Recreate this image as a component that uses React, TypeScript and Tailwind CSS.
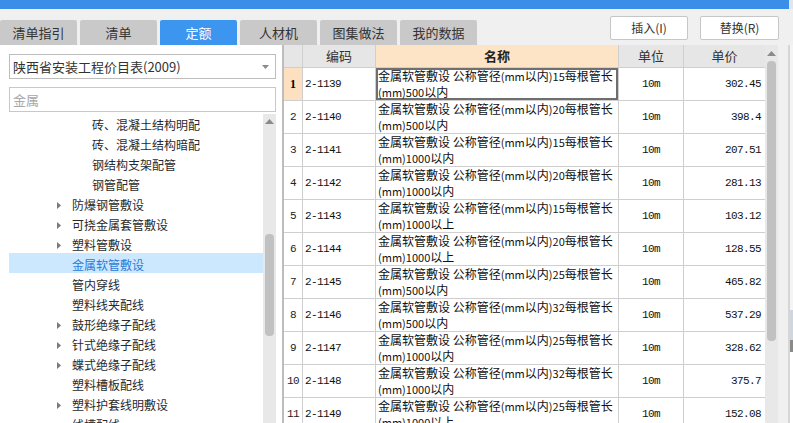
import React from "react";

const tabs = ["清单指引", "清单", "定额", "人材机", "图集做法", "我的数据"];

type TreeItem = { text: string; level: 2 | 3; arrow?: boolean; selected?: boolean };
const tree: TreeItem[] = [
  { text: "砖、混凝土结构明配", level: 3 },
  { text: "砖、混凝土结构暗配", level: 3 },
  { text: "钢结构支架配管", level: 3 },
  { text: "钢管配管", level: 3 },
  { text: "防爆钢管敷设", level: 2, arrow: true },
  { text: "可挠金属套管敷设", level: 2, arrow: true },
  { text: "塑料管敷设", level: 2, arrow: true },
  { text: "金属软管敷设", level: 2, selected: true },
  { text: "管内穿线", level: 2 },
  { text: "塑料线夹配线", level: 2 },
  { text: "鼓形绝缘子配线", level: 2, arrow: true },
  { text: "针式绝缘子配线", level: 2, arrow: true },
  { text: "蝶式绝缘子配线", level: 2, arrow: true },
  { text: "塑料槽板配线", level: 2 },
  { text: "塑料护套线明敷设", level: 2, arrow: true },
  { text: "线槽配线", level: 2 },
];

const rows: [string, string, string, string][] = [
  ["2-1139", "15", "500以内", "302.45"],
  ["2-1140", "20", "500以内", "398.4"],
  ["2-1141", "15", "1000以内", "207.51"],
  ["2-1142", "20", "1000以内", "281.13"],
  ["2-1143", "15", "1000以上", "103.12"],
  ["2-1144", "20", "1000以上", "128.55"],
  ["2-1145", "25", "500以内", "465.82"],
  ["2-1146", "32", "500以内", "537.29"],
  ["2-1147", "25", "1000以内", "328.62"],
  ["2-1148", "32", "1000以内", "375.7"],
  ["2-1149", "25", "1000以上", "152.08"],
];

function UpArrow() {
  return (
    <svg width="9" height="5" viewBox="0 0 9 5">
      <polygon points="0,5 4.5,0 9,5" fill="#8a8a8a" />
    </svg>
  );
}

export default function App() {
  return (
    <div className="w-[793px] h-[423px] overflow-hidden bg-[#f0f0f0] flex flex-col font-['Noto_Sans_CJK_SC',sans-serif] text-[#333]">
      {/* title bar */}
      <div className="h-[9px] flex shrink-0">
        <div className="w-[789px] bg-[#3b8ee8]" />
        <div className="flex-1 bg-[#dfe6ee]" />
      </div>

      {/* toolbar */}
      <div className="h-[36px] flex shrink-0">
        <div className="flex items-end gap-[3px]">
          {tabs.map((t) => (
            <div
              key={t}
              className={
                t === "定额"
                  ? "w-[77px] h-[25px] flex items-center justify-center text-[13px] rounded-t-[2px] bg-[#3c95ef] text-white"
                  : "w-[77px] h-[25px] flex items-center justify-center text-[13px] rounded-t-[2px] bg-[#c9c9c9] text-[#333]"
              }
            >
              {t}
            </div>
          ))}
        </div>
        <div className="ml-auto mr-[14px] mt-[7px] flex gap-[12px]">
          <div className="w-[78px] h-[24px] bg-white border border-[#c6c6c6] rounded-[2px] flex items-center justify-center text-[12px] text-[#333]">
            插入(I)
          </div>
          <div className="w-[79px] h-[24px] bg-white border border-[#c6c6c6] rounded-[2px] flex items-center justify-center text-[12px] text-[#333]">
            替换(R)
          </div>
        </div>
      </div>

      {/* main */}
      <div className="flex-1 flex min-h-0">
        {/* left panel */}
        <div className="w-[282px] bg-white flex flex-col shrink-0">
          <div className="pl-[9px] pt-[9px]">
            <div className="w-[267px] h-[25px] border border-[#bdbdbd] flex items-center pl-[3px] pr-[6px] text-[13px] text-[#333]">
              <span className="flex-1">陕西省安装工程价目表(2009)</span>
              <svg width="7" height="4" viewBox="0 0 7 4">
                <polygon points="0,0 7,0 3.5,4" fill="#8a8a8a" />
              </svg>
            </div>
            <div className="w-[267px] h-[25px] mt-[8px] border border-[#c8c8c8] flex items-center pl-[3px] text-[13px] text-[#a8a8a8]">
              金属
            </div>
          </div>
          <div className="flex-1 flex mt-[1px] min-h-0 overflow-hidden">
            <div className="w-[263px] pl-[9px] flex flex-col shrink-0">
              {tree.map((it) => (
                <div
                  key={it.text}
                  className={
                    it.selected
                      ? "h-[20px] shrink-0 pt-[5px] leading-[14px] text-[12px] bg-[#cce8ff] text-[#2b7bd6] flex"
                      : "h-[20px] shrink-0 pt-[5px] leading-[14px] text-[12px] text-[#2a2a2a] flex"
                  }
                >
                  {it.level === 3 ? (
                    <span className="pl-[83px] whitespace-nowrap">{it.text}</span>
                  ) : (
                    <>
                      <span className="w-[63px] pl-[48px] flex items-center h-[14px]">
                        {it.arrow && (
                          <svg width="4" height="7" viewBox="0 0 4 7">
                            <polygon points="0,0 4,3.5 0,7" fill="#7a7a7a" />
                          </svg>
                        )}
                      </span>
                      <span className="whitespace-nowrap">{it.text}</span>
                    </>
                  )}
                </div>
              ))}
            </div>
            <div className="w-[13px] bg-[#e8e8e8] flex flex-col items-center pt-[5px] mt-[1px] shrink-0">
              <UpArrow />
              <div className="w-[9px] h-[102px] mt-[110px] rounded-[4px] bg-[#c1c1c1]" />
            </div>
          </div>
        </div>
        <div className="w-[2px] bg-[#bdbdbd] shrink-0" />

        {/* table */}
        <div className="w-[481px] bg-white shrink-0 flex flex-col">
          <div className="grid grid-cols-[19px_73px_243px_65px_81px] h-[23px] shrink-0">
            <div className="bg-[#e6e6e6] border-r border-b border-[#cfcfcf]" />
            <div className="bg-[#e6e6e6] border-r border-b border-[#cfcfcf] flex items-center justify-center text-[13px] text-[#333]">
              编码
            </div>
            <div className="bg-[#fde4c6] border-r border-b border-[#cfcfcf] flex items-center justify-center text-[13px] font-bold text-[#222]">
              名称
            </div>
            <div className="bg-[#e6e6e6] border-r border-b border-[#cfcfcf] flex items-center justify-center text-[13px] text-[#333]">
              单位
            </div>
            <div className="bg-[#e6e6e6] border-b border-[#cfcfcf] flex items-center justify-center text-[13px] text-[#333]">
              单价
            </div>
          </div>
          {rows.map((r, i) => (
            <div key={r[0]} className="grid grid-cols-[19px_73px_243px_65px_81px] h-[33px] shrink-0">
              <div
                className={
                  i === 0
                    ? "bg-[#fde0bf] border-r border-b border-[#cfcfcf] flex items-center justify-center text-[12px] font-bold text-black font-['Liberation_Serif',serif]"
                    : "border-r border-b border-[#cfcfcf] flex items-center justify-center text-[11px] text-[#222] font-['Liberation_Mono',monospace] tracking-[-0.5px]"
                }
              >
                {i + 1}
              </div>
              <div className="border-r border-b border-[#cfcfcf] flex items-center pl-[2px] text-[11px] text-[#111] font-['Liberation_Mono',monospace] tracking-[-0.6px]">
                {r[0]}
              </div>
              <div
                className={
                  i === 0
                    ? "border-b border-r border-[#cfcfcf] shadow-[inset_0_0_0_2px_#6f6f6f] pl-[2px] text-[12px] leading-[16px] text-[#111] overflow-hidden whitespace-nowrap"
                    : "border-b border-r border-[#cfcfcf] pl-[2px] text-[12px] leading-[16px] text-[#111] overflow-hidden whitespace-nowrap"
                }
              >
                <div>
                  金属软管敷设 公称管径<span className="text-[11px]">(mm</span>以内<span className="text-[11px]">){r[1]}</span>每根管长
                </div>
                <div>
                  <span className="text-[11px]">(mm){r[2].replace(/以.*/, "")}</span>
                  {r[2].slice(r[2].indexOf("以"))}
                </div>
              </div>
              <div className="border-r border-b border-[#cfcfcf] flex items-center justify-center text-[11px] text-[#111] font-['Liberation_Mono',monospace] tracking-[-0.6px]">
                10m
              </div>
              <div className="border-b border-[#cfcfcf] flex items-center justify-end pr-[4px] text-[11px] text-[#111] font-['Liberation_Mono',monospace] tracking-[-0.6px]">
                {r[3]}
              </div>
            </div>
          ))}
        </div>

        {/* table scrollbar */}
        <div className="w-[13px] bg-[#e8e8e8] flex flex-col items-center pt-[6px] shrink-0">
          <UpArrow />
          <div className="w-[9px] h-[280px] mt-[5px] rounded-[4px] bg-[#c1c1c1]" />
        </div>
        <div className="w-[10px] bg-[#f0f0f0] shrink-0" />
        <div className="w-[2px] bg-[#d6d6d6] shrink-0" />
        <div className="w-[3px] bg-[#f4f4f4] shrink-0 flex flex-col">
          <div className="h-[265px]" />
          <div className="h-[30px] bg-[#cfd6de]" />
          <div className="h-[12px] bg-[#8a8a8a]" />
          <div className="flex-1 bg-white" />
        </div>
      </div>
    </div>
  );
}
